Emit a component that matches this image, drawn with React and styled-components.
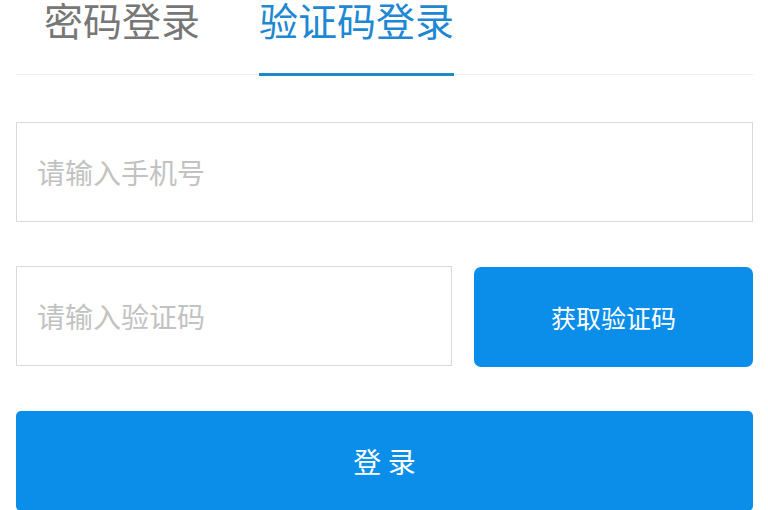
import React, { useState } from 'react';
import styled, { createGlobalStyle } from 'styled-components';

const GlobalStyle = createGlobalStyle`
  html, body {
    margin: 0;
    padding: 0;
    background: #fff;
    overflow: hidden;
  }
  body {
    font-family: "Noto Sans CJK SC", "Noto Sans", sans-serif;
  }
`;

const Page = styled.div`
  width: 768px;
  height: 510px;
  padding: 0 15px 0 16px;
  box-sizing: border-box;
  overflow: hidden;
`;

const TabBar = styled.div`
  display: flex;
  gap: 59px;
  padding-left: 28px;
  border-bottom: 1px solid #eeeeee;
`;

const Tab = styled.div`
  font-size: 39px;
  line-height: 39px;
  padding-bottom: 34px;
  margin-bottom: -2px;
  color: ${p => (p.$active ? '#1f88d2' : '#777777')};
  border-bottom: 3px solid ${p => (p.$active ? '#1f88c6' : 'transparent')};
  cursor: pointer;
  white-space: nowrap;
`;

const Form = styled.form`
  display: flex;
  flex-direction: column;
  gap: 44px;
  margin-top: 47px;
`;

const Row = styled.div`
  display: flex;
  gap: 22px;
`;

const Input = styled.input`
  flex: 1 1 auto;
  width: 100%;
  min-width: 0;
  height: 100px;
  box-sizing: border-box;
  border: 1px solid #d9d9d9;
  border-radius: 0;
  padding: 0 20px;
  font-family: inherit;
  font-size: 28px;
  color: #333;
  outline: none;
  &::placeholder {
    color: #c2c2c2;
  }
`;

const CodeButton = styled.button`
  width: 279px;
  flex-shrink: 0;
  height: 100px;
  margin-top: 1px;
  border: none;
  border-radius: 7px;
  background: #0b8eea;
  color: #fff;
  font-family: inherit;
  font-size: 25px;
  cursor: pointer;
`;

const LoginButton = styled.button`
  flex-shrink: 0;
  height: 100px;
  border: none;
  border-radius: 5px;
  background: #0b8eea;
  color: #fff;
  font-family: inherit;
  font-size: 28px;
  cursor: pointer;
`;

export default function App() {
  const [tab, setTab] = useState('code');
  return (
    <Page>
      <GlobalStyle />
      <TabBar>
        <Tab $active={tab === 'password'} onClick={() => setTab('password')}>密码登录</Tab>
        <Tab $active={tab === 'code'} onClick={() => setTab('code')}>验证码登录</Tab>
      </TabBar>
      <Form onSubmit={e => e.preventDefault()}>
        <Input type="text" placeholder="请输入手机号" />
        <Row>
          <Input type="text" placeholder="请输入验证码" />
          <CodeButton type="button">获取验证码</CodeButton>
        </Row>
        <LoginButton type="submit">登 录</LoginButton>
      </Form>
    </Page>
  );
}
